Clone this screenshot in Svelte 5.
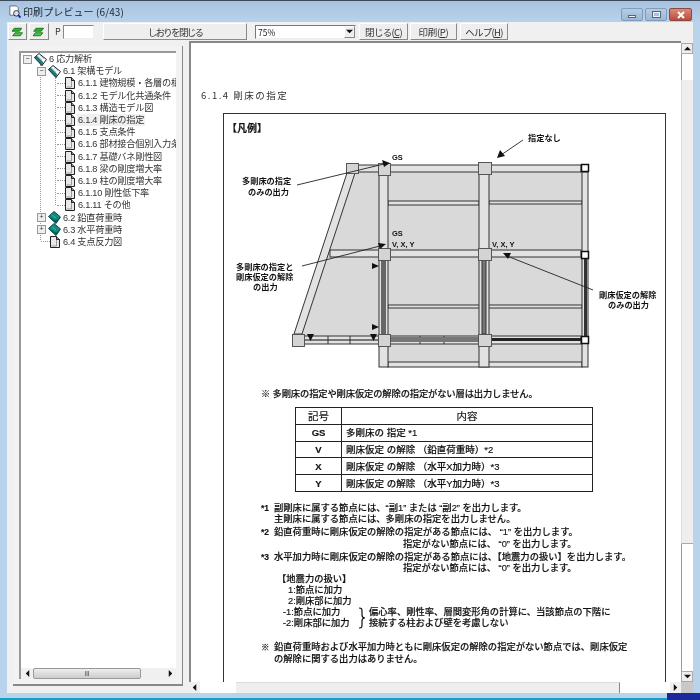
<script>
  const tree = [
    { t: '6 応力解析', lv: 0, icon: 'open', box: '-' },
    { t: '6.1 架構モデル', lv: 1, icon: 'open', box: '-' },
    { t: '6.1.1 建物規模・各層の構', lv: 2, icon: 'page' },
    { t: '6.1.2 モデル化共通条件', lv: 2, icon: 'page' },
    { t: '6.1.3 構造モデル図', lv: 2, icon: 'page' },
    { t: '6.1.4 剛床の指定', lv: 2, icon: 'page', sel: true },
    { t: '6.1.5 支点条件', lv: 2, icon: 'page' },
    { t: '6.1.6 部材接合個別入力条', lv: 2, icon: 'page' },
    { t: '6.1.7 基礎バネ剛性図', lv: 2, icon: 'page' },
    { t: '6.1.8 梁の剛度増大率', lv: 2, icon: 'page' },
    { t: '6.1.9 柱の剛度増大率', lv: 2, icon: 'page' },
    { t: '6.1.10 剛性低下率', lv: 2, icon: 'page' },
    { t: '6.1.11 その他', lv: 2, icon: 'page' },
    { t: '6.2 鉛直荷重時', lv: 1, icon: 'closed', box: '+' },
    { t: '6.3 水平荷重時', lv: 1, icon: 'closed', box: '+' },
    { t: '6.4 支点反力図', lv: 1, icon: 'page' }
  ];
  const rows = [
    ['GS', '多剛床の 指定 *1'],
    ['V', '剛床仮定 の解除 （鉛直荷重時）*2'],
    ['X', '剛床仮定 の解除 （水平X加力時）*3'],
    ['Y', '剛床仮定 の解除 （水平Y加力時）*3']
  ];
  const beams = [
    [358, 165, 223, 7],
    [330, 250, 251, 7],
    [304, 336, 277, 8],
    [388, 201, 91, 4],
    [489, 201, 93, 3],
    [388, 305, 194, 3],
    [388, 362, 194, 5]
  ];
  const cols = [
    [379, 174, 9, 193],
    [479, 174, 10, 193],
    [582, 172, 6, 195]
  ];
  const nodes = [
    [346, 163, 12, 10], [378, 163, 12, 12], [478, 162, 13, 12],
    [378, 248, 12, 12], [478, 248, 13, 12],
    [292, 334, 12, 12], [378, 334, 12, 12], [478, 334, 13, 12]
  ];
  const ends = [[581, 164], [581, 251], [581, 336]];
  const labels = [
    ['GS', 392, 160, 'small'],
    ['GS', 392, 236, 'small'],
    ['V, X, Y', 392, 247, 'small'],
    ['V, X, Y', 492, 247, 'small'],
    ['指定なし', 528, 141, ''],
    ['多剛床の指定', 242, 184, ''],
    ['のみの出力', 248, 195, ''],
    ['多剛床の指定と', 236, 270, ''],
    ['剛床仮定の解除', 236, 280, ''],
    ['の出力', 253, 290, ''],
    ['剛床仮定の解除', 599, 298, ''],
    ['のみの出力', 608, 308, '']
  ];
  const lines = [
    [297, 185, 384, 164],
    [302, 266, 380, 246],
    [523, 140, 501, 155],
    [593, 290, 507, 256]
  ];
  const heads = [
    '390,163 382,160 384,167',
    '386,244 378,243 380,249',
    '497,158 500,150 505,156',
    '503,253 511,253 508,259',
    '307,334 314,334 310.5,341',
    '370,334 377,334 373.5,341',
    '372,263 379,266 372,269',
    '372,324 379,327 372,330'
  ];
</script>

{#snippet icon(kind)}
  {#if kind === 'page'}
    <svg class="ic page" viewBox="0 0 10 12"><path d="M.5.5h6l3 3v8h-9z" fill="#e8e8e8" stroke="#222"/><path d="M1.500 10h5V2" fill="none" stroke="#999"/><path d="M6.500.5v3h3" fill="#999" stroke="#222"/></svg>
  {:else if kind === 'open'}
    <svg class="ic" viewBox="0 0 13 13"><path d="M.5 4.500 5 .5l7.500 6-4.500 6z" fill="#fff" stroke="#123"/><path d="M.5 4.500 8 12.500l.5-3.500-6-6z" fill="#14807a" stroke="#0c3c40" stroke-width=".7"/><path d="M4 3.500l4 3.500M6 2.500l4 3.500" stroke="#9aa" stroke-width=".7"/></svg>
  {:else}
    <svg class="ic" viewBox="0 0 13 13"><path d="M6 .5 12.500 6 8 12.500 .5 5.500z" fill="#0f8a7c" stroke="#0b4a48"/><path d="M.5 5.500 8 12.500 12.500 6 8 9.500z" fill="#0a5a58"/><path d="M4 4l4 3" stroke="#4cb" stroke-width=".8"/></svg>
  {/if}
{/snippet}

{#snippet swap(flip)}
  <svg class="swap" viewBox="0 0 16 12"><path d={flip ? 'M4 1h10L11 5H1z' : 'M3 1h10l-3 4H0z'} fill="#2bb52b" stroke="#0a5a0a"/><path d={flip ? 'M3 7h10l-3 4H0z' : 'M4 7h10l-3 4H1z'} fill="#3ecf3e" stroke="#0a5a0a"/></svg>
{/snippet}

{#snippet arrow(dir)}
  <svg class="arr" viewBox="0 0 6 6"><path d={dir === 'u' ? 'M0 4.500 3 1.500l3 3z' : dir === 'd' ? 'M0 1.500h6L3 4.500z' : dir === 'l' ? 'M4.500 0v6L1.500 3z' : 'M1.500 0v6l3-3z'} fill="#111"/></svg>
{/snippet}

<div class="win">
  <header class="title">
    <svg class="ticon" viewBox="0 0 14 14"><path d="M2 1h7l2 2v8H2z" fill="#fff" stroke="#667"/><circle cx="9" cy="9" r="3" fill="#dde" stroke="#234"/><path d="M11 11l2.500 2.500" stroke="#12a" stroke-width="2"/></svg>
    <span class="ttext">印刷プレビュー (6/43)</span>
    <div class="wbtns">
      <div class="wb"><i class="min"></i></div>
      <div class="wb"><i class="max"></i></div>
      <div class="wb close"><svg viewBox="0 0 10 8"><path d="M2 1l6 6M8 1 2 7" stroke="#fff" stroke-width="2"/></svg></div>
    </div>
  </header>

  <div class="toolbar">
    <button class="tb b1">{@render swap(false)}</button>
    <button class="tb b2">{@render swap(true)}</button>
    <span class="plabel">P</span>
    <div class="pinput"></div>
    <button class="tb close-bm">しおりを閉じる</button>
    <div class="combo"><span>75%</span><div class="cbtn">{@render arrow('d')}</div></div>
    <button class="tb act a1">閉じる(<u>C</u>)</button>
    <button class="tb act a2">印刷(<u>P</u>)</button>
    <button class="tb act a3">ヘルプ(<u>H</u>)</button>
  </div>

  <div class="main">
    <aside class="side">
      <div class="treebox">
        <div class="tree">
          <div class="vline l1"></div>
          <div class="vline l2"></div>
          {#each tree as n}
            <div class="node lv{n.lv}">
              {#if n.box}<span class="box">{n.box === '-' ? '−' : '+'}</span>{:else}<span class="dash"></span>{/if}
              {@render icon(n.icon)}
              <span class="label" class:sel={n.sel}>{n.t}</span>
            </div>
          {/each}
        </div>
        <div class="hbar small">
          <div class="end">{@render arrow('l')}</div>
          <div class="thumb"><span>|||</span></div>
          <div class="gap"></div>
          <div class="end">{@render arrow('r')}</div>
        </div>
      </div>
    </aside>

    <section class="docwrap">
      <div class="docrow">
        <div class="doc">
          <h1>6.1.4 剛床の指定</h1>
          <div class="frame">
            <div class="legend">【凡例】</div>
            <svg class="diagram" viewBox="224 134 440 250" width="440" height="250">
              <polygon points="352,172 585,172 585,367 380,367 380,344 300,336" fill="#d9d9d9"/>
              <polygon points="347,173 355,173 302,334 294,334" class="mem"/>
              {#each beams as b}<rect x={b[0]} y={b[1]} width={b[2]} height={b[3]} class="mem"/>{/each}
              {#each cols as c}<rect x={c[0]} y={c[1]} width={c[2]} height={c[3]} class="mem"/>{/each}
              <rect x="381" y="260" width="5" height="74" fill="#666"/>
              <rect x="482" y="260" width="4" height="74" fill="#777" stroke="#333"/>
              <rect x="584" y="259" width="3" height="77" fill="#333"/>
              <rect x="304" y="339" width="74" height="2" fill="#777"/>
              <path d="M328 336v8M350 336v8M420 336v8M444 336v8" stroke="#333"/>
              <rect x="390" y="337" width="88" height="5" fill="#777"/>
              <rect x="491" y="338" width="90" height="3" fill="#222"/>
              <rect x="588" y="164" width="1" height="8" fill="#555"/>
              {#each nodes as n}<rect x={n[0] + .5} y={n[1] + .5} width={n[2]} height={n[3]} class="nd"/>{/each}
              {#each ends as e}<rect x={e[0] + .5} y={e[1] + .5} width="7" height="7" class="endn"/>{/each}
              {#each lines as l}<line x1={l[0]} y1={l[1]} x2={l[2]} y2={l[3]} class="lead"/>{/each}
              {#each heads as h}<polygon points={h} fill="#111"/>{/each}
              {#each labels as l}<text x={l[1]} y={l[2]} class="lab {l[3]}">{l[0]}</text>{/each}
            </svg>

            <p class="warn">※ 多剛床の指定や剛床仮定の解除の指定がない層は出力しません。</p>

            <table>
              <thead><tr><th class="c1">記号</th><th>内容</th></tr></thead>
              <tbody>
                {#each rows as r}
                  <tr><td class="c1">{r[0]}</td><td>{r[1]}</td></tr>
                {/each}
              </tbody>
            </table>

            <div class="notes">
              <div class="note"><span class="mk">*1</span><div>副剛床に属する節点には、“副1” または “副2” を出力します。<br>主剛床に属する節点には、多剛床の指定を出力しません。</div></div>
              <div class="note"><span class="mk">*2</span><div>鉛直荷重時に剛床仮定の解除の指定がある節点には、 “1” を出力します。<br><span class="push">指定がない節点には、 “0” を出力します。</span></div></div>
              <div class="note"><span class="mk">*3</span><div>水平加力時に剛床仮定の解除の指定がある節点には、【地震力の扱い】を出力します。<br><span class="push">指定がない節点には、 “0” を出力します。</span></div></div>
            </div>

            <div class="seismic">
              <div class="shead">【地震力の扱い】</div>
              <div class="pos">1:節点に加力</div>
              <div class="pos">2:剛床部に加力</div>
              <div class="negrow">
                <div class="neg"><div>-1:節点に加力</div><div>-2:剛床部に加力</div></div>
                <svg class="brace" viewBox="0 0 8 22"><path d="M1 1c3 0 3 1 3 4v3c0 2 1 3 3 3-2 0-3 1-3 3v3c0 3 0 4-3 4" fill="none" stroke="#111" stroke-width="1.200"/></svg>
                <div class="negtext">偏心率、剛性率、層間変形角の計算に、当該節点の下階に<br>接続する柱および壁を考慮しない</div>
              </div>
            </div>

            <div class="note last"><span class="mk">※</span><div>鉛直荷重時および水平加力時ともに剛床仮定の解除の指定がない節点では、剛床仮定<br>の解除に関する出力はありません。</div></div>
          </div>
        </div>

        <div class="vbar">
          <div class="end">{@render arrow('u')}</div>
          <div class="vtrack top"></div>
          <div class="vthumb"></div>
          <div class="vtrack"></div>
          <div class="end">{@render arrow('d')}</div>
        </div>
      </div>
      <div class="hbar big">
        <div class="end">{@render arrow('l')}</div>
        <div class="htrack a"></div>
        <div class="hthumb"></div>
        <div class="htrack b"></div>
        <div class="end">{@render arrow('r')}</div>
        <div class="corner"></div>
      </div>
    </section>
  </div>
  <div class="desk"></div>
</div>

<style>
  :global(body) { margin: 0; }
  .win {
    width: 700px; height: 700px; overflow: hidden; position: relative;
    display: flex; flex-direction: column; box-sizing: border-box;
    background: #b9d3ec; filter: blur(.3px);
    font-family: "Noto Sans CJK JP", "Noto Sans", sans-serif; color: #222;
  }
  .title {
    height: 22px; flex: none; display: flex; align-items: center;
    padding: 0 8px 0 8px; box-sizing: border-box;
    background: linear-gradient(#a9c3df, #b8d2ec);
    border-top: 1px solid #3a4a5a;
  }
  .ticon { width: 13px; height: 13px; margin-right: 2px; }
  .ttext { font-size: 10px; letter-spacing: .1px; color: #1a2430; }
  .wbtns { margin-left: auto; display: flex; gap: 2px; align-self: flex-start; margin-top: 7px; }
  .wb {
    width: 20px; height: 11px; border: 1px solid #7f9cbc; border-radius: 2px; box-sizing: content-box;
    background: linear-gradient(#b6cde3, #9cb8d4); display: flex; align-items: center; justify-content: center;
  }
  .wb.close { width: 21px; background: linear-gradient(#d98a7a, #c04a38); border-color: #8a4a44; }
  .wb.close svg { width: 10px; height: 8px; }
  .min { width: 8px; height: 3px; background: #eef; border: 1px solid #567; box-sizing: border-box; margin-top: 4px; }
  .max { width: 9px; height: 7px; border: 2px solid #eef; outline: 1px solid #567; outline-offset: -1px; box-sizing: border-box; }

  .toolbar {
    flex: none; height: 19px; margin: 0 7px 0 7px; background: #f0f0f0;
    display: flex; align-items: center; box-sizing: border-box;
  }
  .tb {
    height: 17px; padding: 0; margin: 0; font: inherit; font-size: 9.500px; color: #333;
    background: #eeeeee; border: 1px solid; border-color: #fff #8a8a8a #8a8a8a #fff;
    display: flex; align-items: center; justify-content: center; box-sizing: border-box; white-space: pre;
  }
  .b1 { width: 19px; margin-left: 1px; }
  .b2 { width: 20px; margin-left: 2px; }
  .swap { width: 12px; height: 10px; }
  .plabel { font-size: 9px; margin-left: 6px; width: 8px; color: #333; }
  .pinput { width: 31px; height: 14px; background: #fff; border: 1px solid; border-color: #888 #eee #eee #888; box-sizing: border-box; }
  .close-bm { width: 144px; margin-left: 9px; letter-spacing: -1.700px; }
  .combo {
    width: 101px; height: 14px; margin-left: 8px; background: #fff; font-size: 8.500px; display: flex;
    align-items: center; justify-content: space-between; border: 1px solid; border-color: #777 #eee #eee #777; box-sizing: border-box;
  }
  .combo span { padding-left: 2px; }
  .cbtn { width: 11px; height: 12px; background: #eee; border: 1px solid; border-color: #fff #888 #888 #fff; box-sizing: border-box; display: flex; align-items: center; justify-content: center; }
  .arr { width: 7px; height: 7px; display: block; }
  .act { margin-left: 2px; letter-spacing: -.7px; }
  .a1 { width: 49px; margin-left: 3px; }
  .a2 { width: 47px; letter-spacing: -.3px; }
  .a3 { width: 48px; margin-left: 3px; }

  .main { flex: 1; min-height: 0; display: flex; margin: 0 7px 0 7px; background: #f0f0f0; }
  .side { width: 182px; flex: none; padding: 5px 6px 7px 6px; box-sizing: border-box; display: flex; background: #f0f0f0; }
  .treebox {
    flex: 1; display: flex; flex-direction: column;
    border-right: 1px solid #888; border-bottom: 2px solid #888; padding: 5px 6px 5px 6px; background: #f2f2f2; min-width: 0;
  }
  .tree {
    flex: 1; background: #fff; border-left: 2px solid #999; border-top: 2px solid #999;
    position: relative; overflow: hidden; font-size: 9.200px; color: #333; letter-spacing: -.25px;
    font-family: "Liberation Sans", "Noto Sans CJK JP", sans-serif;
  }
  .vline { position: absolute; border-left: 1px dotted #999; width: 0; }
  .l1 { left: 19px; top: 11px; height: 176px; }
  .l2 { left: 34px; top: 25px; height: 127px; }
  .node { height: 12.200px; display: flex; align-items: center; white-space: nowrap; position: relative; }
  .lv0 { padding-left: 2px; }
  .lv1 { padding-left: 16px; }
  .lv2 { padding-left: 36px; }
  .box { width: 9px; height: 9px; box-sizing: border-box; border: 1px solid #999; background: #eee; font-size: 7px; line-height: 6px; text-align: center; flex: none; margin-right: 2px; position: relative; }
  .dash { width: 9px; border-top: 1px dotted #999; flex: none; margin-left: 4px; }
  .lv2 .dash { width: 8px; margin-left: 0; }
  .ic { width: 13px; height: 13px; flex: none; position: relative; }
  .ic.page { width: 10px; height: 12px; }
  .label { margin-left: 1px; padding: 1px 1px 0; line-height: 11px; }
  .lv2 .label, .dash ~ .label { margin-left: 2px; }
  .label.sel { background: #f0f0f0; }

  .hbar { display: flex; flex: none; align-items: stretch; }
  .hbar .end { display: flex; align-items: center; justify-content: center; flex: none; }
  .hbar.small { height: 11px; background: #f0f0f0; border-left: 2px solid #999; }
  .small .end { width: 12px; }
  .thumb { width: 108px; border: 1px solid #999; border-radius: 2px; background: linear-gradient(#eee, #ccc); font-size: 6px; line-height: 9px; text-align: center; box-sizing: border-box; font-family: "Liberation Sans", sans-serif; }
  .small .gap { flex: 1; }

  .docwrap { flex: 1; display: flex; flex-direction: column; min-width: 0; }
  .docrow { flex: 1; min-height: 0; display: flex; }
  .doc { flex: 1; min-width: 0; overflow: hidden; background: #fff; border-left: 2px solid #888; border-top: 2px solid #888; padding: 0; }
  h1 { margin: 46px 0 12px 10px; height: 12px; line-height: 12px; font-size: 9.500px; font-weight: 400; letter-spacing: 1.500px; color: #333; }
  .frame { margin-left: 32px; width: 443px; height: 700px; box-sizing: border-box; border: 1px solid #333; font-size: 9.300px; font-weight: 500; line-height: 11.500px; color: #111; -webkit-text-stroke: .15px #111; font-family: "Liberation Sans", "Noto Sans CJK JP", sans-serif; }
  .legend { padding: 9px 0 0 3px; font-size: 10px; font-weight: 700; line-height: 12px; height: 11px; }
  .diagram { display: block; overflow: visible; }
  .mem { fill: #e2e2e2; stroke: #333; }
  .nd { fill: #d4d4d4; stroke: #555; }
  .endn { fill: #fff; stroke: #111; stroke-width: 1.500; }
  .lead { stroke: #222; stroke-width: .9; }
  .lab { font-size: 8.200px; font-weight: 700; fill: #111; }
  .lab.small { font-size: 7.500px; }
  .warn { margin: 5px 0 6px 37px; height: 12px; letter-spacing: -.15px; }
  table { margin-left: 71px; width: 298px; height: 84px; border-collapse: collapse; font-size: 9.500px; table-layout: fixed; }
  th, td { border: 1px solid #222; padding: 1px 0 0 4px; font-weight: 500; line-height: 12px; height: 16.800px; box-sizing: border-box; }
  th { text-align: center; padding: 1px 0 0; font-size: 10.500px; font-weight: 400; }
  .c1 { width: 46px; text-align: center; padding: 1px 0 0; font-weight: 700; }
  th.c1 { font-weight: 400; }
  .notes { margin: 11px 0 0 37px; display: flex; flex-direction: column; gap: 1.500px; white-space: nowrap; }
  .note { display: flex; white-space: nowrap; }
  .mk { width: 13px; flex: none; font-weight: 700; font-size: 8.500px; }
  .push { padding-left: 129px; }
  .seismic { margin: -.5px 0 0 53px; line-height: 10.800px; white-space: nowrap; }
  .shead { height: 11px; }
  .pos { padding-left: 11px; }
  .negrow { display: flex; align-items: center; margin-left: 6px; }
  .neg { width: 75px; flex: none; }
  .brace { width: 8px; height: 22px; flex: none; }
  .negtext { margin-left: 3px; }
  .note.last { margin: 13px 0 0 37px; }

  .vbar { width: 12px; flex: none; display: flex; flex-direction: column; background: #f0f0f0; border-top: 2px solid #f0f0f0; box-sizing: border-box; }
  .vbar .end { height: 11px; flex: none; border: 1px solid #aaa; box-sizing: border-box; background: #eee; display: flex; align-items: center; justify-content: center; }
  .vtrack { flex: 1; background: #fff; border-left: 1px solid #999; }
  .vtrack.top { flex: none; height: 26px; }
  .vthumb { height: 464px; flex: none; background: #eeeeee; border-left: 1px solid #ddd; border-bottom: 1px solid #aaa; box-sizing: border-box; }

  .hbar.big { height: 11px; background: #f0f0f0; }
  .big .end { width: 11px; }
  .htrack { background: #fff; }
  .htrack.a { width: 36px; }
  .hthumb { width: 384px; background: #eee; border-right: 1px solid #888; border-top: 1px solid #ddd; box-sizing: border-box; }
  .htrack.b { flex: 1; }
  .corner { width: 12px; background: #c8c8c8; flex: none; }

  .desk { flex: none; height: 7px; background: linear-gradient(#b9d3ec 0 5px, #18a0c4 5px); }
  .desk::after { content: ""; position: absolute; right: 0; bottom: 0; width: 33px; height: 7px; background: #1a2a9c; }
</style>
